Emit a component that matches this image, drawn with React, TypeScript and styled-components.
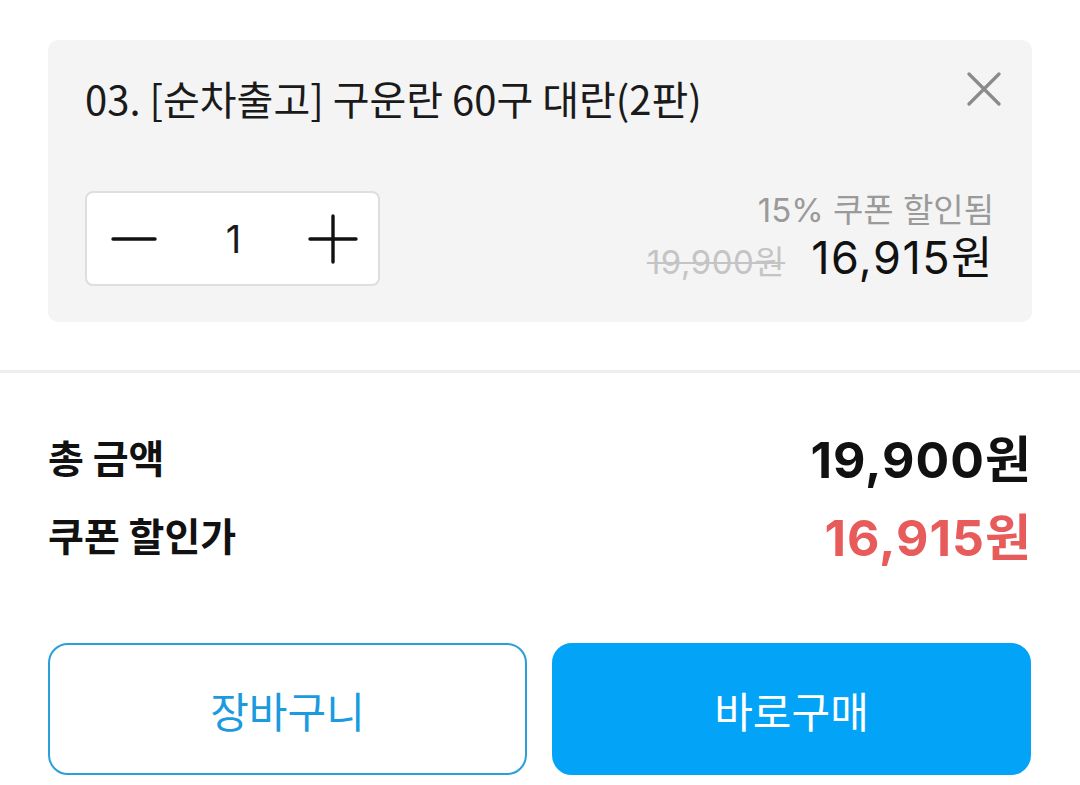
import styled, { createGlobalStyle } from "styled-components";

const GlobalStyle = createGlobalStyle`
  html, body {
    margin: 0;
    padding: 0;
    background: #ffffff;
  }
  body {
    font-family: "Noto Sans CJK KR", "Noto Sans", sans-serif;
    color: #111;
  }
`;

const numberFont = `Inter, "Noto Sans CJK KR", sans-serif`;

const Page = styled.div`
  width: 1080px;
  height: 785px;
  overflow: hidden;
  display: flex;
  flex-direction: column;
`;

const ItemSection = styled.div`
  padding: 40px 48px 48px;
`;

const ItemCard = styled.div`
  background: #f4f4f4;
  border-radius: 10px;
  padding: 28px 31px 36px 37px;
  height: 282px;
  box-sizing: border-box;
  display: flex;
  flex-direction: column;
  justify-content: space-between;
`;

const CardHeader = styled.div`
  display: flex;
  justify-content: space-between;
  align-items: flex-start;
`;

const ItemTitle = styled.div`
  font-size: 40px;
  line-height: 60px;
  color: #1a1a1a;
`;

const CloseButton = styled.button`
  border: none;
  background: none;
  padding: 0;
  margin-top: 4px;
  width: 34px;
  height: 34px;
  display: flex;
  align-items: center;
  justify-content: center;
  cursor: pointer;
`;

const CardFooter = styled.div`
  display: flex;
  justify-content: space-between;
  align-items: flex-end;
`;

const Stepper = styled.div`
  width: 295px;
  height: 95px;
  box-sizing: border-box;
  background: #fff;
  border: 2px solid #dedede;
  border-radius: 8px;
  display: flex;
  align-items: center;
  justify-content: space-between;
  padding: 0 20px 0 22px;
`;

const StepButton = styled.button`
  border: none;
  background: none;
  padding: 0;
  width: 50px;
  height: 50px;
  display: flex;
  align-items: center;
  justify-content: center;
`;

const Quantity = styled.span`
  font-family: ${numberFont};
  font-size: 38px;
  color: #1a1a1a;
`;

const PriceBox = styled.div`
  display: flex;
  flex-direction: column;
  align-items: flex-end;
  margin-right: 7px;
`;

const CouponNote = styled.div`
  font-family: ${numberFont};
  font-size: 33px;
  line-height: 40px;
  color: #9a9a9a;
`;

const PriceRow = styled.div`
  display: flex;
  align-items: baseline;
  gap: 26px;
`;

const OldPrice = styled.span`
  font-family: ${numberFont};
  font-size: 33px;
  letter-spacing: 0.5px;
  color: #c4c4c4;
  text-decoration: line-through;
  text-decoration-thickness: 2px;
`;

const NewPrice = styled.span`
  font-family: ${numberFont};
  font-size: 45px;
  line-height: 56px;
  letter-spacing: 1.5px;
  color: #111;
`;

const Divider = styled.div`
  height: 3px;
  background: #eeeeee;
`;

const Summary = styled.div`
  padding: 52px 48px 0 48px;
  display: flex;
  flex-direction: column;
  gap: 16px;
`;

const SummaryRow = styled.div`
  display: flex;
  justify-content: space-between;
  align-items: center;
  height: 62px;
`;

const SummaryLabel = styled.span`
  font-size: 39px;
  font-weight: 700;
  color: #111;
`;

const SummaryValue = styled.span<{ $accent?: boolean }>`
  font-family: ${numberFont};
  font-size: 50px;
  font-weight: 700;
  letter-spacing: 1px;
  color: ${(p) => (p.$accent ? "#e85b5b" : "#111")};
`;

const Actions = styled.div`
  display: grid;
  grid-template-columns: 1fr 1fr;
  gap: 25px;
  padding: 78px 49px 0 48px;
`;

const ActionButton = styled.button<{ $primary?: boolean }>`
  height: 132px;
  box-sizing: border-box;
  border-radius: 20px;
  border: 2px solid ${(p) => (p.$primary ? "#03a3f7" : "#2b9fd9")};
  background: ${(p) => (p.$primary ? "#03a3f7" : "#ffffff")};
  color: ${(p) => (p.$primary ? "#ffffff" : "#1a9be0")};
  font-family: "Noto Sans CJK KR", "Noto Sans", sans-serif;
  font-size: 42px;
  cursor: pointer;
`;

export default function App() {
  return (
    <Page>
      <GlobalStyle />
      <ItemSection>
        <ItemCard>
          <CardHeader>
            <ItemTitle>03. [순차출고] 구운란 60구 대란(2판)</ItemTitle>
            <CloseButton aria-label="삭제">
              <svg width="34" height="34" viewBox="0 0 34 34">
                <path
                  d="M2 2 L32 32 M32 2 L2 32"
                  stroke="#8a8a8a"
                  strokeWidth="3.2"
                  strokeLinecap="round"
                />
              </svg>
            </CloseButton>
          </CardHeader>
          <CardFooter>
            <Stepper>
              <StepButton aria-label="감소">
                <svg width="46" height="6" viewBox="0 0 46 6">
                  <path d="M2 3 H44" stroke="#111" strokeWidth="3.4" strokeLinecap="round" />
                </svg>
              </StepButton>
              <Quantity>1</Quantity>
              <StepButton aria-label="증가">
                <svg width="50" height="50" viewBox="0 0 50 50">
                  <path
                    d="M2 25 H48 M25 2 V48"
                    stroke="#111"
                    strokeWidth="3.4"
                    strokeLinecap="round"
                  />
                </svg>
              </StepButton>
            </Stepper>
            <PriceBox>
              <CouponNote>15% 쿠폰 할인됨</CouponNote>
              <PriceRow>
                <OldPrice>19,900원</OldPrice>
                <NewPrice>16,915원</NewPrice>
              </PriceRow>
            </PriceBox>
          </CardFooter>
        </ItemCard>
      </ItemSection>
      <Divider />
      <Summary>
        <SummaryRow>
          <SummaryLabel>총 금액</SummaryLabel>
          <SummaryValue>19,900원</SummaryValue>
        </SummaryRow>
        <SummaryRow>
          <SummaryLabel>쿠폰 할인가</SummaryLabel>
          <SummaryValue $accent>16,915원</SummaryValue>
        </SummaryRow>
      </Summary>
      <Actions>
        <ActionButton>장바구니</ActionButton>
        <ActionButton $primary>바로구매</ActionButton>
      </Actions>
    </Page>
  );
}
